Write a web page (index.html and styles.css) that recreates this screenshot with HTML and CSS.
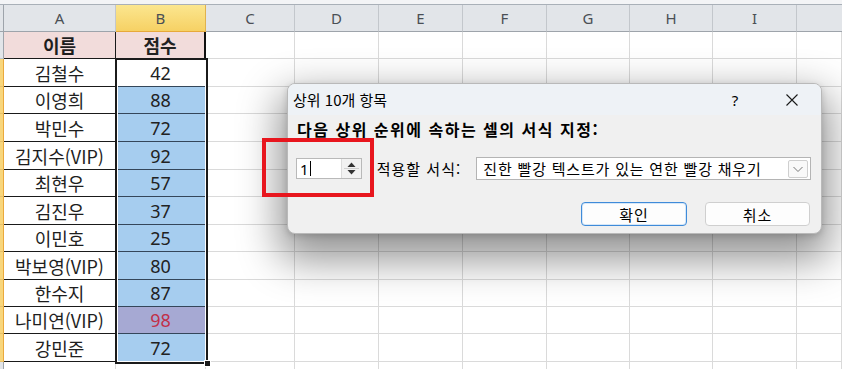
FILE: index.html
```html
<!DOCTYPE html>
<html lang="ko">
<head>
<meta charset="utf-8">
<link rel="stylesheet" href="styles.css">
</head>
<body>
<div class="app">
  <div class="topstrip"></div>
  <div class="sheet">
    <div class="rh corner"></div>
    <div class="ch">A</div>
    <div class="ch sel">B</div>
    <div class="ch">C</div>
    <div class="ch">D</div>
    <div class="ch">E</div>
    <div class="ch">F</div>
    <div class="ch">G</div>
    <div class="ch">H</div>
    <div class="ch">I</div>
    <div class="ch last"></div>

    <div class="rh"></div>
    <div class="c name head">이름</div>
    <div class="c score head bright">점수</div>
    <div class="c"></div><div class="c"></div><div class="c"></div><div class="c"></div><div class="c"></div><div class="c"></div><div class="c"></div><div class="c"></div>

    <div class="rh on"></div><div class="c name">김철수</div><div class="c score white">42</div>
    <div class="c"></div><div class="c"></div><div class="c"></div><div class="c"></div><div class="c"></div><div class="c"></div><div class="c"></div><div class="c"></div>

    <div class="rh on"></div><div class="c name">이영희</div><div class="c score">88</div>
    <div class="c"></div><div class="c"></div><div class="c"></div><div class="c"></div><div class="c"></div><div class="c"></div><div class="c"></div><div class="c"></div>

    <div class="rh on"></div><div class="c name">박민수</div><div class="c score">72</div>
    <div class="c"></div><div class="c"></div><div class="c"></div><div class="c"></div><div class="c"></div><div class="c"></div><div class="c"></div><div class="c"></div>

    <div class="rh on"></div><div class="c name">김지수(VIP)</div><div class="c score">92</div>
    <div class="c"></div><div class="c"></div><div class="c"></div><div class="c"></div><div class="c"></div><div class="c"></div><div class="c"></div><div class="c"></div>

    <div class="rh on"></div><div class="c name">최현우</div><div class="c score">57</div>
    <div class="c"></div><div class="c"></div><div class="c"></div><div class="c"></div><div class="c"></div><div class="c"></div><div class="c"></div><div class="c"></div>

    <div class="rh on"></div><div class="c name">김진우</div><div class="c score">37</div>
    <div class="c"></div><div class="c"></div><div class="c"></div><div class="c"></div><div class="c"></div><div class="c"></div><div class="c"></div><div class="c"></div>

    <div class="rh on"></div><div class="c name">이민호</div><div class="c score">25</div>
    <div class="c"></div><div class="c"></div><div class="c"></div><div class="c"></div><div class="c"></div><div class="c"></div><div class="c"></div><div class="c"></div>

    <div class="rh on"></div><div class="c name">박보영(VIP)</div><div class="c score">80</div>
    <div class="c"></div><div class="c"></div><div class="c"></div><div class="c"></div><div class="c"></div><div class="c"></div><div class="c"></div><div class="c"></div>

    <div class="rh on"></div><div class="c name">한수지</div><div class="c score">87</div>
    <div class="c"></div><div class="c"></div><div class="c"></div><div class="c"></div><div class="c"></div><div class="c"></div><div class="c"></div><div class="c"></div>

    <div class="rh on"></div><div class="c name">나미연(VIP)</div><div class="c score top">98</div>
    <div class="c"></div><div class="c"></div><div class="c"></div><div class="c"></div><div class="c"></div><div class="c"></div><div class="c"></div><div class="c"></div>

    <div class="rh on"></div><div class="c name">강민준</div><div class="c score">72</div>
    <div class="c"></div><div class="c"></div><div class="c"></div><div class="c"></div><div class="c"></div><div class="c"></div><div class="c"></div><div class="c"></div>

    <div class="rh"></div><div class="c"></div><div class="c"></div>
    <div class="c"></div><div class="c"></div><div class="c"></div><div class="c"></div><div class="c"></div><div class="c"></div><div class="c"></div><div class="c"></div>
  </div>

  <div class="selection"><span class="handle"></span></div>

  <div class="dialog">
    <div class="titlebar">
      <span class="title">상위 10개 항목</span>
      <span class="help">?</span>
      <svg class="close" width="14" height="14" viewBox="0 0 14 14"><path d="M1.5 1.5 L12.5 12.5 M12.5 1.5 L1.5 12.5" stroke="#1a1a1a" stroke-width="1.1" fill="none"/></svg>
    </div>
    <div class="body">
      <div class="prompt">다음 상위 순위에 속하는 셀의 서식 지정:</div>
      <div class="row">
        <div class="spin">
          <span class="val">1<span class="caret"></span></span>
          <div class="spinbtn">
            <svg width="19" height="19" viewBox="0 0 19 19">
              <path d="M5.5 8 L9.5 3.5 L13.5 8 Z" fill="#333"/>
              <line x1="2" y1="9.5" x2="17" y2="9.5" stroke="#d0d0d0" stroke-width="1"/>
              <path d="M5.5 11 L9.5 15.5 L13.5 11 Z" fill="#333"/>
            </svg>
          </div>
        </div>
        <span class="label">적용할 서식:</span>
        <div class="combo">
          <span class="combo-text">진한 빨강 텍스트가 있는 연한 빨강 채우기</span>
          <div class="ddbtn">
            <svg width="12" height="8" viewBox="0 0 12 8"><polyline points="1.5,2 6,6.5 10.5,2" fill="none" stroke="#777" stroke-width="1"/></svg>
          </div>
        </div>
      </div>
      <div class="buttons">
        <div class="btn primary">확인</div>
        <div class="btn">취소</div>
      </div>
    </div>
  </div>

  <div class="highlight"></div>
</div>
</body>
</html>
```

FILE: styles.css
```css
* { box-sizing: border-box; }
html, body {
  margin: 0;
  padding: 0;
  background: #ffffff;
  overflow: hidden;
}
.app {
  position: relative;
  width: 842px;
  height: 369px;
  overflow: hidden;
  font-family: "Noto Sans CJK KR", "Noto Sans", sans-serif;
}
.topstrip {
  height: 5px;
  background: #f3f4f6;
  border-bottom: 1px solid #a9b0b8;
}
.sheet {
  display: grid;
  grid-template-columns: 4px 112px 90px 89px 84px 84px 84px 83px 83px 84px 45px;
  grid-template-rows: 27px 27px 28px 27px 28px 28px 27px 28px 27px 28px 27px 27px 28px 28px;
}
.ch {
  background: #e2e5e9;
  border-right: 1px solid #c3c7cc;
  border-bottom: 1px solid #9ea4ab;
  display: flex;
  align-items: center;
  justify-content: center;
  font-family: "Noto Sans", "Open Sans", sans-serif;
  font-size: 15px;
  color: #4a4f55;
}
.ch.sel {
  background: linear-gradient(#fbe68f, #f6d164);
  border-bottom: 1px solid #e7a93a;
  border-right: 1px solid #e0b24d;
  color: #4a4f55;
}
.ch.last { border-right: none; }
.rh {
  background: #e2e5e9;
  border-bottom: 1px solid #c3c7cc;
  border-right: 1px solid #9ea4ab;
}
.rh.corner { border-bottom: 1px solid #9ea4ab; }
.rh.on {
  background: #f8d67c;
  border-right: 1px solid #eaa93c;
  border-bottom: 1px solid #e8c16a;
}
.c {
  border-right: 1px solid #dadada;
  border-bottom: 1px solid #dadada;
  display: flex;
  align-items: center;
  justify-content: center;
  font-size: 18px;
  color: #1e1e1e;
  white-space: nowrap;
}
.c.name {
  border-right: 1px solid #1a1a1a;
  border-bottom: 1px solid #1a1a1a;
}
.c.head {
  background: #f2dcdb;
  font-weight: 700;
  border-bottom: 1px solid #1a1a1a;
}
.c.score {
  background: #a6cdef;
  border-bottom: 1px solid #34465a;
  border-right: 1px solid #1a1a1a;
  color: #222;
  font-family: "Noto Sans", "Noto Sans CJK KR", sans-serif;
}
.c.score.head {
  background: #f2dcdb;
  font-family: "Noto Sans CJK KR", sans-serif;
  border-bottom: 1px solid #1a1a1a;
}
.c.bright { border-right: 2px solid #111; }
.c.score.white { background: #ffffff; }
.c.score.top {
  background: #a6a9d3;
  color: #c2304a;
}

.selection {
  position: absolute;
  left: 115px;
  top: 58px;
  width: 93px;
  height: 306px;
  border: 2px solid #1b1b1b;
  box-shadow: inset 0 0 0 1px #ffffff;
  pointer-events: none;
}
.handle {
  position: absolute;
  right: -5px;
  bottom: -5px;
  width: 7px;
  height: 7px;
  background: #1b1b1b;
  border: 1px solid #ffffff;
}

.dialog {
  position: absolute;
  left: 287px;
  top: 83px;
  width: 535px;
  height: 151px;
  background: #f0f0f0;
  border: 1px solid #b9b9b9;
  border-radius: 8px;
  box-shadow: 0 18px 40px 8px rgba(0, 0, 0, 0.42), 0 2px 6px rgba(0, 0, 0, 0.15);
  overflow: hidden;
  color: #000;
}
.titlebar {
  height: 31px;
  background: #eef2f6;
  display: flex;
  align-items: center;
  padding-left: 5px;
  font-size: 15px;
}
.title { flex: 1; }
.help {
  width: 14px;
  text-align: center;
  margin-right: 43px;
  font-family: "Noto Sans", sans-serif;
  font-size: 15px;
}
.close { margin-right: 22px; }
.body {
  padding: 5px 10px 0 8px;
}
.prompt {
  font-weight: 700;
  font-size: 16px;
  line-height: 18px;
  letter-spacing: 1.5px;
  padding-left: 1px;
}
.row {
  display: flex;
  align-items: center;
  height: 23px;
  margin-top: 19px;
}
.spin {
  width: 66px;
  height: 21px;
  background: #fff;
  border: 1px solid #b9b9b9;
  display: flex;
  align-items: center;
  justify-content: space-between;
}
.val {
  font-family: "Noto Sans", sans-serif;
  font-size: 15px;
  padding-left: 3px;
  display: flex;
  align-items: center;
}
.caret {
  display: inline-block;
  width: 1px;
  height: 15px;
  background: #000;
  margin-left: 1px;
}
.spinbtn {
  width: 20px;
  height: 19px;
  background: #f2f2f2;
  border-left: 1px solid #dcdcdc;
  display: flex;
}
.label {
  width: 100px;
  margin-left: 15px;
  font-size: 15px;
  letter-spacing: 1px;
}
.combo {
  width: 336px;
  height: 23px;
  background: #fff;
  border: 1px solid #b4b4b4;
  display: flex;
  align-items: center;
  justify-content: space-between;
  padding-left: 6px;
  padding-right: 2px;
}
.combo-text {
  font-size: 15px;
  letter-spacing: 0.8px;
}
.ddbtn {
  width: 20px;
  height: 18px;
  border: 1px solid #cfcfcf;
  border-radius: 2px;
  background: #f9f9f9;
  display: flex;
  align-items: center;
  justify-content: center;
}
.buttons {
  display: flex;
  justify-content: flex-end;
  gap: 18px;
  margin-top: 22px;
  padding-right: 1px;
}
.btn {
  width: 105px;
  height: 24px;
  border: 1px solid #cfcfcf;
  border-radius: 4px;
  background: #fdfdfd;
  display: flex;
  align-items: center;
  justify-content: center;
  font-size: 15px;
  letter-spacing: 1px;
}
.btn.primary {
  width: 106px;
  border: 1px solid #3f8bd9;
  box-shadow: inset 0 0 0 1px #d6e7f8;
}

.highlight {
  position: absolute;
  left: 262px;
  top: 138px;
  width: 112px;
  height: 59px;
  border: 4px solid #e8161e;
  pointer-events: none;
}
```
